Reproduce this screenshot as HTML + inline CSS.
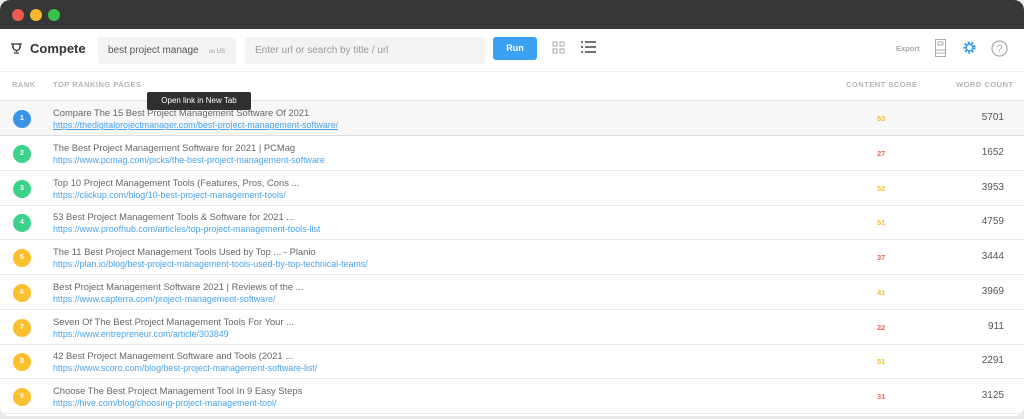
<!DOCTYPE html>
<html><head><style>
*{margin:0;padding:0;box-sizing:border-box}
body{width:1024px;height:419px;overflow:hidden;background:#e9e9e9;font-family:"Liberation Sans",sans-serif;position:relative}
.win{position:absolute;left:0;top:0;width:1024px;height:416px;background:#fff;border-radius:10px;overflow:hidden}
.tb{height:29px;background:#363739;position:relative}
.dot{position:absolute;top:9px;width:12px;height:12px;border-radius:50%}
.bar{position:absolute;top:29px;left:0;right:0;height:43px;border-bottom:1px solid #eee}
.inp{position:absolute;top:8px;height:27px;background:#f3f3f3;border-radius:3px;font-size:10px;color:#555;line-height:27px;padding-left:10px}
.hd{position:absolute;top:80px;font-size:7.5px;font-weight:bold;color:#b4b4b4;letter-spacing:.5px}
.row{position:absolute;left:0;right:0;height:35px;border-bottom:1px solid #e8e8e8}
.c{position:absolute;left:13px;top:9px;width:18px;height:18px;border-radius:50%;color:#fff;font-size:7px;font-weight:bold;text-align:center;line-height:18px}
.t{position:absolute;left:53px;top:6px;font-size:9.4px;color:#666}
.u{position:absolute;left:53px;top:19px;font-size:8.9px;color:#4aa3ea}
.s{position:absolute;left:877px;top:13px;font-size:7.5px;font-weight:bold}
.w{position:absolute;right:20px;top:11px;font-size:10px;color:#555}
</style></head><body><div class="win">
<div class="tb"><div class="dot" style="left:12px;background:#ee5a4f"></div><div class="dot" style="left:30px;background:#f5b630"></div><div class="dot" style="left:48px;background:#39c24a"></div></div>
<div class="bar">
<svg style="position:absolute;left:11px;top:14px" width="11" height="11" viewBox="0 0 11 11"><path d="M2 1h7v3a3.5 3.5 0 0 1-7 0z M0 1h2v2a1 1 0 0 1-1 1 M11 1H9v2a1 1 0 0 0 1 1 M5.5 7v2 M3 10h5" stroke="#333" stroke-width="1.3" fill="none"/></svg>
<div style="position:absolute;left:30px;top:12px;font-size:13px;font-weight:bold;color:#333">Compete</div>
<div class="inp" style="left:98px;width:138px">best project manage<span style="font-size:6px;color:#999;margin-left:10px">us US</span></div>
<div class="inp" style="left:245px;width:240px;color:#999;padding-left:10px">Enter url or search by title / url</div>
<div style="position:absolute;left:493px;top:8px;width:44px;height:23px;background:#3aa1f0;border-radius:3px;color:#fff;font-size:9px;font-weight:bold;text-align:center;line-height:23px">Run</div>
<svg style="position:absolute;left:552px;top:12px" width="13" height="13"><g fill="none" stroke="#aaa"><rect x="1" y="1" width="4" height="4"/><rect x="8" y="1" width="4" height="4"/><rect x="1" y="8" width="4" height="4"/><rect x="8" y="8" width="4" height="4"/></g></svg>
<svg style="position:absolute;left:581px;top:11px" width="15" height="14"><g stroke="#444" stroke-width="1.5"><path d="M0 2h2M4 2h11M0 7h2M4 7h11M0 12h2M4 12h11"/></g></svg>
<div style="position:absolute;left:896px;top:15px;font-size:7.5px;font-weight:bold;color:#aaa">Export</div>
<svg style="position:absolute;left:935px;top:10px" width="11" height="18"><rect x=".5" y=".5" width="10" height="17" fill="none" stroke="#aaa"/><rect x="3" y="3" width="5" height="3" fill="none" stroke="#aaa"/><path d="M1 11h9M1 14h9" stroke="#aaa"/></svg>
<svg style="position:absolute;left:962px;top:11px" width="15" height="15" viewBox="0 0 16 16"><circle cx="8" cy="8" r="5" fill="none" stroke="#3a9be8" stroke-width="3" stroke-dasharray="2 1.6"/><circle cx="8" cy="8" r="3.5" fill="none" stroke="#3a9be8" stroke-width="1.5"/></svg>
<svg style="position:absolute;left:991px;top:11px" width="17" height="17"><circle cx="8.5" cy="8.5" r="7.5" fill="none" stroke="#aaa" stroke-width="1.2"/><text x="8.5" y="12.5" font-size="11" text-anchor="middle" fill="#aaa" font-family="Liberation Sans">?</text></svg>
</div>
<div class="hd" style="left:12px">RANK</div>
<div class="hd" style="left:53px">TOP RANKING PAGES</div>
<div class="hd" style="left:846px">CONTENT SCORE</div>
<div class="hd" style="left:956px">WORD COUNT</div>
<div style="position:absolute;top:100px;left:0;right:0;border-top:1px solid #e2e2e2"></div>
<div class="row" style="top:101px;background:#f7f7f7;border-bottom:1px solid #ddd"><div class="c" style="background:#3a94ea">1</div><div class="t">Compare The 15 Best Project Management Software Of 2021</div><div class="u" style="text-decoration:underline">https://thedigitalprojectmanager.com/best-project-management-software/</div><div class="s" style="color:#f5c02c">53</div><div class="w">5701</div></div>
<div class="row" style="top:136px"><div class="c" style="background:#3dd28a">2</div><div class="t">The Best Project Management Software for 2021 | PCMag</div><div class="u">https://www.pcmag.com/picks/the-best-project-management-software</div><div class="s" style="color:#ee6a5a">27</div><div class="w">1652</div></div>
<div class="row" style="top:171px"><div class="c" style="background:#3dd28a">3</div><div class="t">Top 10 Project Management Tools (Features, Pros, Cons ...</div><div class="u">https://clickup.com/blog/10-best-project-management-tools/</div><div class="s" style="color:#f5c02c">52</div><div class="w">3953</div></div>
<div class="row" style="top:205px"><div class="c" style="background:#3dd28a">4</div><div class="t">53 Best Project Management Tools &amp; Software for 2021 ...</div><div class="u">https://www.proofhub.com/articles/top-project-management-tools-list</div><div class="s" style="color:#f5c02c">51</div><div class="w">4759</div></div>
<div class="row" style="top:240px"><div class="c" style="background:#fbc02d">5</div><div class="t">The 11 Best Project Management Tools Used by Top ... - Planio</div><div class="u">https://plan.io/blog/best-project-management-tools-used-by-top-technical-teams/</div><div class="s" style="color:#ee6a5a">37</div><div class="w">3444</div></div>
<div class="row" style="top:275px"><div class="c" style="background:#fbc02d">6</div><div class="t">Best Project Management Software 2021 | Reviews of the ...</div><div class="u">https://www.capterra.com/project-management-software/</div><div class="s" style="color:#f5c02c">41</div><div class="w">3969</div></div>
<div class="row" style="top:310px"><div class="c" style="background:#fbc02d">7</div><div class="t">Seven Of The Best Project Management Tools For Your ...</div><div class="u">https://www.entrepreneur.com/article/303849</div><div class="s" style="color:#ee6a5a">22</div><div class="w">911</div></div>
<div class="row" style="top:344px"><div class="c" style="background:#fbc02d">8</div><div class="t">42 Best Project Management Software and Tools (2021 ...</div><div class="u">https://www.scoro.com/blog/best-project-management-software-list/</div><div class="s" style="color:#f5c02c">51</div><div class="w">2291</div></div>
<div class="row" style="top:379px"><div class="c" style="background:#fbc02d">9</div><div class="t">Choose The Best Project Management Tool In 9 Easy Steps</div><div class="u">https://hive.com/blog/choosing-project-management-tool/</div><div class="s" style="color:#ee6a5a">31</div><div class="w">3125</div></div>
<div style="position:absolute;left:147px;top:92px;width:104px;height:18px;background:#2f2f2f;border-radius:2px;color:#fff;font-size:8px;line-height:18px;text-align:center">Open link in New Tab</div>
</div></body></html>
